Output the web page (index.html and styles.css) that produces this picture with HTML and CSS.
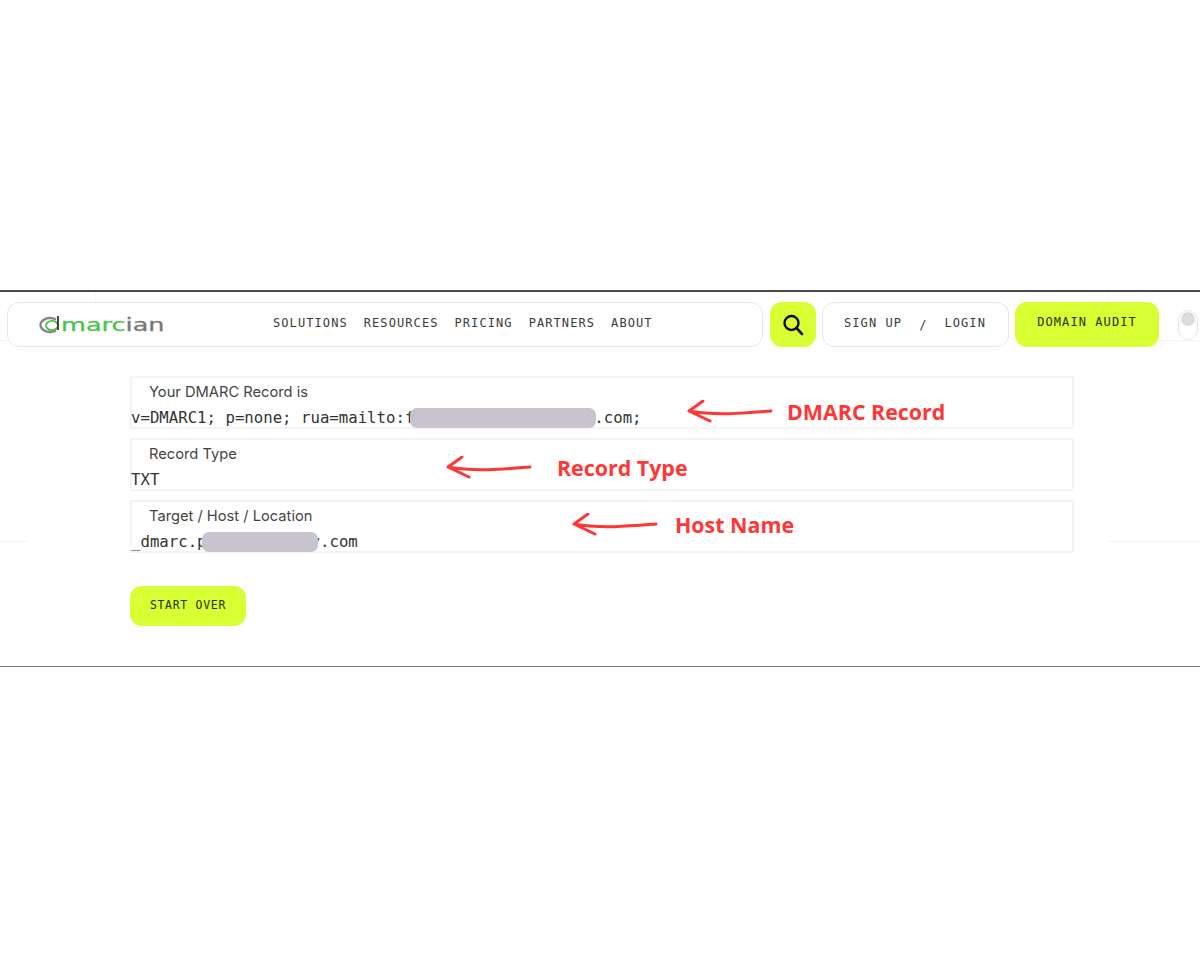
FILE: index.html
```html
<!DOCTYPE html>
<html lang="en">
<head>
  <meta charset="utf-8">
  <title>dmarcian DMARC Record</title>
  <link rel="stylesheet" href="styles.css">
</head>
<body>
  <div class="shot">
    <!-- faint grid lines from the page behind -->
    <span class="line line-v line-v1"></span>
    <span class="line line-v line-v2"></span>
    <span class="line line-h line-h1"></span>
    <span class="line line-h line-h2"></span>
    <span class="line line-h line-h3"></span>
    <span class="line line-h line-h4"></span>

    <header class="nav">
      <div class="nav-pill">
        <a class="logo">
          <svg class="logo-mark" width="24" height="20" viewBox="0 0 24 20">
            <path d="M17 4.6A9.5 7 0 1 0 17 15.4" fill="none" stroke="#858585" stroke-width="2.4"/>
            <ellipse cx="13" cy="10.5" rx="6" ry="4.6" fill="none" stroke="#4cc24c" stroke-width="1.8"/>
            <path d="M19 1V15" fill="none" stroke="#333" stroke-width="1.8"/>
          </svg>
          <span class="logo-text"><span class="logo-green">marc</span>ian</span>
        </a>
        <nav class="links">
          <a>SOLUTIONS</a>
          <a>RESOURCES</a>
          <a>PRICING</a>
          <a>PARTNERS</a>
          <a>ABOUT</a>
        </nav>
      </div>
      <button class="search-btn" aria-label="Search">
        <svg width="24" height="24" viewBox="0 0 24 24">
          <circle cx="10.5" cy="10" r="7" fill="none" stroke="#111" stroke-width="2.4"/>
          <path d="M15.6 15.2L21 21" fill="none" stroke="#111" stroke-width="2.6" stroke-linecap="round"/>
        </svg>
      </button>
      <div class="sign-pill">
        <a>SIGN UP</a>
        <span class="slash">/</span>
        <a>LOGIN</a>
      </div>
      <button class="audit-btn">DOMAIN AUDIT</button>
      <div class="toggle"><span class="knob"></span></div>
    </header>

    <main class="result">
      <section class="card">
        <div class="label">Your DMARC Record is</div>
        <div class="value">v=DMARC1; p=none; rua=mailto:f<span class="redact redact-mail"></span>.com;</div>
        <div class="note note-dmarc">
          <svg class="arrow" width="86" height="24" viewBox="0 0 86 24"><path d="M84 11C60 13 30 16 2 11M2 11L16 1M2 11L23 21"/></svg>
          <span>DMARC Record</span>
        </div>
      </section>
      <section class="card">
        <div class="label">Record Type</div>
        <div class="value">TXT</div>
        <div class="note note-type">
          <svg class="arrow" width="86" height="24" viewBox="0 0 86 24"><path d="M84 11C60 13 30 16 2 11M2 11L16 1M2 11L23 21"/></svg>
          <span>Record Type</span>
        </div>
      </section>
      <section class="card">
        <div class="label">Target / Host / Location</div>
        <div class="value">_dmarc.p<span class="redact redact-host"></span>y.com</div>
        <div class="note note-host">
          <svg class="arrow" width="86" height="24" viewBox="0 0 86 24"><path d="M84 11C60 13 30 16 2 11M2 11L16 1M2 11L23 21"/></svg>
          <span>Host Name</span>
        </div>
      </section>
      <button class="start-btn">START OVER</button>
    </main>
  </div>
</body>
</html>
```

FILE: styles.css
```css
body {
  margin: 0;
  background: #fff;
  font-family: Inter, "Liberation Sans", sans-serif;
}
a {
  color: inherit;
}
button {
  border: none;
  padding: 0;
  cursor: pointer;
}

.shot {
  position: relative;
  box-sizing: border-box;
  height: 377px;
  margin-top: 290px;
  border-top: 2px solid #4a4a4a;
  border-bottom: 1px solid #7a7a7a;
}
.line {
  position: absolute;
  background: #f5f5f5;
}
.line-v {
  top: 0;
  width: 1px;
  height: 10px;
}
.line-v1 { left: 95px; }
.line-v2 { left: 1108px; }
.line-h {
  height: 1px;
}
.line-h1 { top: 48px; left: 0; width: 7px; }
.line-h2 { top: 48px; left: 1159px; width: 41px; }
.line-h3 { top: 249px; left: 0; width: 28px; }
.line-h4 { top: 249px; left: 1108px; width: 92px; }

.nav {
  position: relative;
  display: flex;
  align-items: flex-start;
  padding: 10px 0 0 7px;
  font-family: "DejaVu Sans Mono", monospace;
  font-size: 12px;
  letter-spacing: 1.08px;
  color: #3a3a3a;
}
.nav-pill {
  box-sizing: border-box;
  display: flex;
  align-items: center;
  width: 756px;
  height: 45px;
  padding-left: 31px;
  background: #fff;
  border: 1px solid #e8e8e8;
  border-radius: 12px;
}
.logo {
  display: flex;
  align-items: center;
  width: 234px;
}
.logo-mark {
  flex: none;
  margin-top: 1px;
}
.logo-text {
  display: inline-block;
  margin: 1px 0 0 -2px;
  font-family: "DejaVu Sans", sans-serif;
  font-size: 18px;
  line-height: 20px;
  letter-spacing: 0;
  color: #777;
  -webkit-text-stroke: 0.3px currentColor;
  transform: scaleX(1.42);
  transform-origin: left center;
}
.logo-green {
  color: #4cc24c;
}
.links {
  display: flex;
  gap: 16px;
  margin-top: -3px;
}
.search-btn {
  display: flex;
  align-items: center;
  justify-content: center;
  width: 46px;
  height: 45px;
  margin-left: 7px;
  background: #d8ff33;
  border-radius: 12px;
}
.sign-pill {
  box-sizing: border-box;
  display: flex;
  align-items: center;
  width: 187px;
  height: 45px;
  margin-left: 6px;
  padding: 0 0 3px 21px;
  background: #fff;
  border: 1px solid #e8e8e8;
  border-radius: 12px;
}
.slash {
  margin: 4px 17px 0 17px;
}
.audit-btn {
  width: 144px;
  height: 45px;
  margin-left: 6px;
  padding-bottom: 5px;
  background: #d8ff33;
  border-radius: 12px;
  font: inherit;
  letter-spacing: 1.08px;
  color: #2a2e10;
}
.toggle {
  box-sizing: border-box;
  width: 20px;
  height: 30px;
  margin: 8px 0 0 19px;
  padding: 1px 2px;
  border: 1px solid #e6e6e6;
  border-radius: 10px;
}
.knob {
  display: block;
  width: 14px;
  height: 14px;
  border-radius: 50%;
  background: #dcdcdc;
}

.result {
  display: flex;
  flex-direction: column;
  align-items: flex-start;
  gap: 9px;
  width: 944px;
  margin: 29px 0 0 130px;
}
.card {
  position: relative;
  box-sizing: border-box;
  width: 100%;
  height: 53px;
  border: 2px solid #f4f4f4;
}
.label {
  height: 25px;
  padding-left: 17px;
  font-size: 14.7px;
  line-height: 29px;
  color: #444;
}
.value {
  height: 24px;
  margin-left: -1px;
  font-family: "DejaVu Sans Mono", monospace;
  font-size: 15.7px;
  line-height: 30px;
  color: #333;
  white-space: nowrap;
}
.redact {
  position: relative;
  display: inline-block;
  height: 20px;
  vertical-align: -5px;
  background: #c8c3cf;
  border-radius: 7px;
}
.redact-mail {
  width: 186px;
  margin: 0 -2px 0 -4px;
}
.redact-host {
  width: 116px;
  margin: 0 -7px 0 -5px;
}

.note {
  position: absolute;
  display: flex;
  align-items: center;
  font-family: "Open Sans", sans-serif;
  font-size: 21.4px;
  font-weight: 700;
  color: #ff3636;
  white-space: nowrap;
}
.arrow {
  flex: none;
}
.arrow path {
  fill: none;
  stroke: #ff3636;
  stroke-width: 3;
  stroke-linecap: round;
  stroke-linejoin: round;
}
.note-dmarc { left: 555px; top: 19px; gap: 14px; }
.note-type { left: 314px; top: 13px; gap: 25px; }
.note-host { left: 440px; top: 8px; gap: 17px; }

.start-btn {
  width: 116px;
  height: 40px;
  margin-top: 24px;
  padding-bottom: 2px;
  background: #d8ff33;
  border-radius: 12px;
  font-family: "DejaVu Sans Mono", monospace;
  font-size: 11.5px;
  letter-spacing: 0.7px;
  color: #2a2e10;
}
```
